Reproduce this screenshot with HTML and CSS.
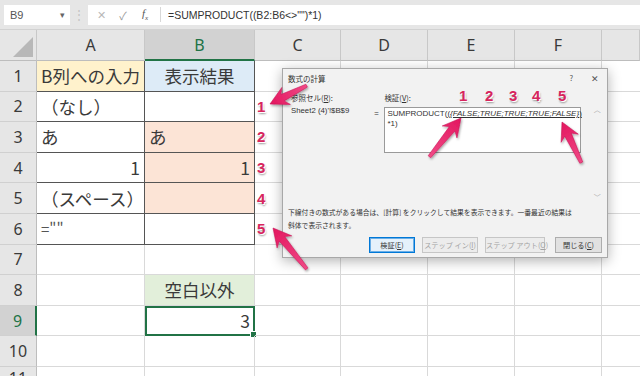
FILE: index.html
```html
<!DOCTYPE html>
<html lang="ja">
<head>
    <meta charset="UTF-8">
    <meta name="viewport" content="width=device-width, initial-scale=1.0">
    <title>数式の計算 - SUMPRODUCT</title>
    <link rel="stylesheet" href="styles.css">
</head>
<body>
<div class="page">

    <div class="fbar">
        <div class="namebox"><span>B9</span><span class="caret">▾</span></div>
        <div class="fsep">⋮</div>
        <div class="fbox">
            <span class="ficon cancel">✕</span>
            <span class="ficon enter">✓</span>
            <span class="ficon fx">f<sub>x</sub></span>
            <span class="ftext">=SUMPRODUCT((B2:B6&lt;&gt;"")*1)</span>
        </div>
    </div>

    <div class="sheet">
        <!-- header row -->
        <div class="corner">
            <svg width="20" height="20" viewBox="0 0 20 20"><polygon points="20,0 20,20 0,20" fill="#b8b8b8"/></svg>
        </div>
        <div class="ch">A</div>
        <div class="ch sel">B</div>
        <div class="ch">C</div>
        <div class="ch">D</div>
        <div class="ch">E</div>
        <div class="ch">F</div>
        <div class="ch last"></div>

        <!-- row 1 -->
        <div class="rh">1</div>
        <div class="c bx yellow">B列への入力</div>
        <div class="c bx blue center">表示結果</div>
        <div class="c"></div><div class="c"></div><div class="c"></div><div class="c"></div><div class="c last"></div>

        <!-- row 2 -->
        <div class="rh">2</div>
        <div class="c bx">（なし）</div>
        <div class="c bx"></div>
        <div class="c"><span class="mk">1</span></div><div class="c"></div><div class="c"></div><div class="c"></div><div class="c last"></div>

        <!-- row 3 -->
        <div class="rh">3</div>
        <div class="c bx">あ</div>
        <div class="c bx peach">あ</div>
        <div class="c"><span class="mk">2</span></div><div class="c"></div><div class="c"></div><div class="c"></div><div class="c last"></div>

        <!-- row 4 -->
        <div class="rh">4</div>
        <div class="c bx right">1</div>
        <div class="c bx peach right">1</div>
        <div class="c"><span class="mk">3</span></div><div class="c"></div><div class="c"></div><div class="c"></div><div class="c last"></div>

        <!-- row 5 -->
        <div class="rh">5</div>
        <div class="c bx">（スペース）</div>
        <div class="c bx peach"></div>
        <div class="c"><span class="mk">4</span></div><div class="c"></div><div class="c"></div><div class="c"></div><div class="c last"></div>

        <!-- row 6 -->
        <div class="rh">6</div>
        <div class="c bx quote">=""</div>
        <div class="c bx"></div>
        <div class="c"><span class="mk">5</span></div><div class="c"></div><div class="c"></div><div class="c"></div><div class="c last"></div>

        <!-- row 7 -->
        <div class="rh">7</div>
        <div class="c"></div><div class="c"></div><div class="c"></div><div class="c"></div><div class="c"></div><div class="c"></div><div class="c last"></div>

        <!-- row 8 -->
        <div class="rh">8</div>
        <div class="c"></div>
        <div class="c green center">空白以外</div>
        <div class="c"></div><div class="c"></div><div class="c"></div><div class="c"></div><div class="c last"></div>

        <!-- row 9 -->
        <div class="rh sel">9</div>
        <div class="c"></div>
        <div class="c right active">3</div>
        <div class="c"></div><div class="c"></div><div class="c"></div><div class="c"></div><div class="c last"></div>

        <!-- row 10 -->
        <div class="rh">10</div>
        <div class="c"></div><div class="c"></div><div class="c"></div><div class="c"></div><div class="c"></div><div class="c"></div><div class="c last"></div>

        <!-- row 11 (cut off) -->
        <div class="rh">11</div>
        <div class="c"></div><div class="c"></div><div class="c"></div><div class="c"></div><div class="c"></div><div class="c"></div><div class="c last"></div>
    </div>

    <!-- 数式の計算 dialog -->
    <div class="dlg">
        <div class="dlg-title">
            <span>数式の計算</span>
            <span class="dlg-ctrl"><span class="help">?</span><span class="close">✕</span></span>
        </div>
        <div class="dlg-body">
            <div class="dlg-ref">
                <div class="lbl">参照セル(<u>R</u>):</div>
                <div class="val">Sheet2 (4)'!$B$9</div>
            </div>
            <div class="dlg-eq">=</div>
            <div class="dlg-ver">
                <div class="lbl">検証(<u>V</u>):</div>
                <div class="tbox">SUMPRODUCT(<u>(<i>{FALSE;TRUE;TRUE;TRUE;FALSE}</i>)</u><br>*1)</div>
            </div>
            <div class="dlg-scroll"><span>︿</span><span>﹀</span></div>
        </div>
        <div class="dlg-note">下線付きの数式がある場合は、[計算] をクリックして結果を表示できます。一番最近の結果は<br>斜体で表示されます。</div>
        <div class="dlg-actions">
            <button class="btn primary">検証(<u>E</u>)</button>
            <button class="btn off">ステップ イン(<u>I</u>)</button>
            <button class="btn off">ステップ アウト(<u>O</u>)</button>
            <button class="btn">閉じる(<u>C</u>)</button>
        </div>

        <span class="num n1">1</span>
        <span class="num n2">2</span>
        <span class="num n3">3</span>
        <span class="num n4">4</span>
        <span class="num n5">5</span>
    </div>

    <!-- annotation arrows -->
    <svg class="arrows" width="640" height="376" viewBox="0 0 640 376">
        <defs>
            <filter id="sh" x="-30%" y="-30%" width="160%" height="160%">
                <feDropShadow dx="1" dy="1.5" stdDeviation="1.2" flood-color="#000" flood-opacity="0.35"/>
            </filter>
            <linearGradient id="pk" x1="0" y1="0" x2="1" y2="0">
                <stop offset="0" stop-color="#f04a86"/>
                <stop offset="1" stop-color="#e3165f"/>
            </linearGradient>
        </defs>
        <g filter="url(#sh)" fill="url(#pk)" stroke="#c80f52" stroke-width="0.5">
            <path transform="translate(270 104) rotate(153.4)" d="M0 0 L-18 -9.5 L-14 -3.6 L-41 -1.6 L-41 1.6 L-14 3.6 L-18 9.5 Z"/>
            <path transform="translate(461 118) rotate(-50.8)" d="M0 0 L-18 -9.5 L-14 -3.6 L-50 -1.6 L-50 1.6 L-14 3.6 L-18 9.5 Z"/>
            <path transform="translate(562 122) rotate(-115.4)" d="M0 0 L-18 -9.5 L-14 -3.6 L-45 -1.6 L-45 1.6 L-14 3.6 L-18 9.5 Z"/>
            <path transform="translate(273 228) rotate(-129.5)" d="M0 0 L-18 -9.5 L-14 -3.6 L-53 -1.6 L-53 1.6 L-14 3.6 L-18 9.5 Z"/>
        </g>
    </svg>

</div>
</body>
</html>
```

FILE: styles.css
```css
body {
    margin: 0;
    font-family: "Noto Sans", "Noto Sans CJK JP", sans-serif;
    background: #fff;
    color: #333;
}

.page {
    position: relative;
    width: 640px;
    height: 376px;
    overflow: hidden;
}

/* formula bar */

.fbar {
    height: 30px;
    box-sizing: border-box;
    display: flex;
    align-items: center;
    padding-left: 4px;
    background: #e6e6e6;
    border-bottom: 1px solid #d2d2d2;
}

.namebox {
    width: 66px;
    height: 20px;
    box-sizing: border-box;
    display: flex;
    align-items: center;
    justify-content: space-between;
    padding: 0 5px 0 6px;
    background: #fff;
    font-family: "Liberation Sans", sans-serif;
    font-size: 11px;
    color: #555;
}

.namebox .caret {
    font-size: 9px;
    color: #666;
}

.fsep {
    width: 18px;
    text-align: center;
    font-size: 12px;
    color: #c4c4c4;
}

.fbox {
    flex: 1;
    height: 20px;
    display: flex;
    align-items: center;
    background: #fff;
}

.ficon {
    width: 22px;
    text-align: center;
    color: #9a9a9a;
    font-size: 11px;
}

.ficon.cancel {
    margin-left: 2px;
    color: #b8b8b8;
}

.ficon.fx {
    font-family: "Liberation Serif", serif;
    font-style: italic;
    font-size: 11px;
    color: #555;
    padding-right: 4px;
    border-right: 1px solid #d8d8d8;
}

.ficon.fx sub {
    font-size: 7px;
}

.ftext {
    margin-left: 7px;
    font-family: "Liberation Sans", sans-serif;
    font-size: 10.5px;
    color: #333;
}

/* sheet grid */

.sheet {
    display: grid;
    grid-template-columns: 37px 108px 110px 86px 87px 87px 87px 1fr;
    grid-template-rows: 31px repeat(10, 30.6px) 1fr;
    height: 346px;
}

.corner {
    background: #e6e6e6;
    border-right: 1px solid #c8c8c8;
    border-bottom: 1px solid #bdbdbd;
    display: flex;
    align-items: flex-end;
    justify-content: flex-end;
    padding: 0 3px 3px 0;
}

.ch {
    background: #e6e6e6;
    border-right: 1px solid #c8c8c8;
    border-bottom: 1px solid #bdbdbd;
    display: flex;
    align-items: center;
    justify-content: center;
    font-size: 16px;
    color: #3a3a3a;
}

.ch.sel {
    background: #d2d2d2;
    color: #217346;
    border-bottom: 2px solid #217346;
}

.rh {
    background: #e6e6e6;
    border-right: 1px solid #bdbdbd;
    border-bottom: 1px solid #d0d0d0;
    display: flex;
    align-items: center;
    justify-content: center;
    font-size: 16px;
    color: #3a3a3a;
}

.rh.sel {
    background: #d2d2d2;
    color: #217346;
    border-right: 2px solid #217346;
}

.c {
    position: relative;
    border-right: 1px solid #d9d9d9;
    border-bottom: 1px solid #d9d9d9;
    display: flex;
    align-items: center;
    padding: 0 4px;
    font-family: "Noto Sans CJK JP", sans-serif;
    font-size: 17.5px;
    color: #3a3a3a;
    white-space: nowrap;
    overflow: hidden;
}

.c.last {
    border-right: none;
}

.c.bx {
    border-right-color: #555;
    border-bottom-color: #555;
}

.c.center { justify-content: center; }
.c.right  { justify-content: flex-end; }

.yellow { background: #fff2cc; }
.blue   { background: #ddebf7; }
.peach  { background: #fce4d6; }
.green  { background: #e2efda; }

.c.quote {
    font-size: 15px;
    color: #555;
}

.c.active {
    outline: 2px solid #217346;
    outline-offset: -2px;
    overflow: visible;
}

.c.active::after {
    content: "";
    position: absolute;
    right: -3px;
    bottom: -3px;
    width: 5px;
    height: 5px;
    background: #217346;
    border: 1px solid #fff;
}

.mk {
    margin-left: -2px;
    font-family: "Liberation Sans", sans-serif;
    font-weight: bold;
    font-size: 15px;
    color: #d8255d;
    text-shadow: 1px 1px 0 #fff, 1px 2px 2px rgba(0, 0, 0, 0.4);
}

/* dialog */

.dlg {
    position: absolute;
    left: 282px;
    top: 68px;
    width: 326px;
    height: 190px;
    box-sizing: border-box;
    background: #f2f2f2;
    border: 1px solid #a8a8a8;
    box-shadow: 0 3px 12px rgba(0, 0, 0, 0.3);
    font-family: "Noto Sans CJK JP", sans-serif;
    font-size: 7.5px;
    color: #333;
    padding: 0 5px;
}

.dlg-title {
    height: 18px;
    display: flex;
    align-items: center;
    justify-content: space-between;
    font-size: 7.5px;
}

.dlg-ctrl {
    display: flex;
    gap: 18px;
    margin-right: 3px;
    color: #555;
}

.dlg-ctrl .close {
    font-size: 9px;
}

.dlg-body {
    display: flex;
    margin-top: 5px;
    height: 110px;
    padding-left: 3px;
}

.lbl {
    height: 15px;
    line-height: 12px;
}

.dlg-ref {
    width: 84px;
}

.dlg-ref .val {
    font-family: "Liberation Sans", sans-serif;
    font-size: 7.8px;
    margin-top: -1px;
}

.dlg-eq {
    width: 10px;
    padding-top: 15px;
    text-align: center;
    font-size: 8px;
}

.dlg-ver {
    width: 197px;
    margin-left: 3px;
}

.tbox {
    height: 46px;
    box-sizing: border-box;
    background: #fff;
    border: 1px solid #9a9a9a;
    padding: 1px 2px;
    font-family: "Liberation Sans", sans-serif;
    font-size: 8px;
    line-height: 10px;
    color: #333;
}

.dlg-scroll {
    width: 10px;
    margin-left: 11px;
    margin-top: 12px;
    display: flex;
    flex-direction: column;
    justify-content: space-between;
    align-items: center;
    color: #aaa;
    font-size: 7px;
}

.dlg-note {
    margin-top: 4px;
    line-height: 13px;
    font-size: 6.8px;
}

.dlg-actions {
    margin-top: 5px;
    display: flex;
    justify-content: flex-end;
    gap: 7px;
}

.btn {
    height: 16px;
    box-sizing: border-box;
    padding: 0;
    background: #e1e1e1;
    border: 1px solid #adadad;
    font-family: "Noto Sans CJK JP", sans-serif;
    font-size: 7.2px;
    color: #333;
    width: 47px;
    white-space: nowrap;
}

.btn.primary {
    width: 46px;
    background: #e5f1fb;
    border: 1px solid #0078d7;
    box-shadow: inset 0 0 0 1px #6aaee6;
}

.btn.off {
    width: 56px;
    color: #a3a3a3;
    border-color: #c6c6c6;
    background: #ececec;
}

.btn.off + .btn.off {
    width: 60px;
    margin-right: 3px;
}

.num {
    position: absolute;
    top: 18px;
    font-family: "Liberation Sans", sans-serif;
    font-weight: bold;
    font-size: 15px;
    color: #d8255d;
    text-shadow: 1px 1px 0 #fff, 1px 2px 2px rgba(0, 0, 0, 0.4);
}

.n1 { left: 176px; }
.n2 { left: 202px; }
.n3 { left: 226px; }
.n4 { left: 249px; }
.n5 { left: 275px; }

.arrows {
    position: absolute;
    left: 0;
    top: 0;
    pointer-events: none;
}
```
